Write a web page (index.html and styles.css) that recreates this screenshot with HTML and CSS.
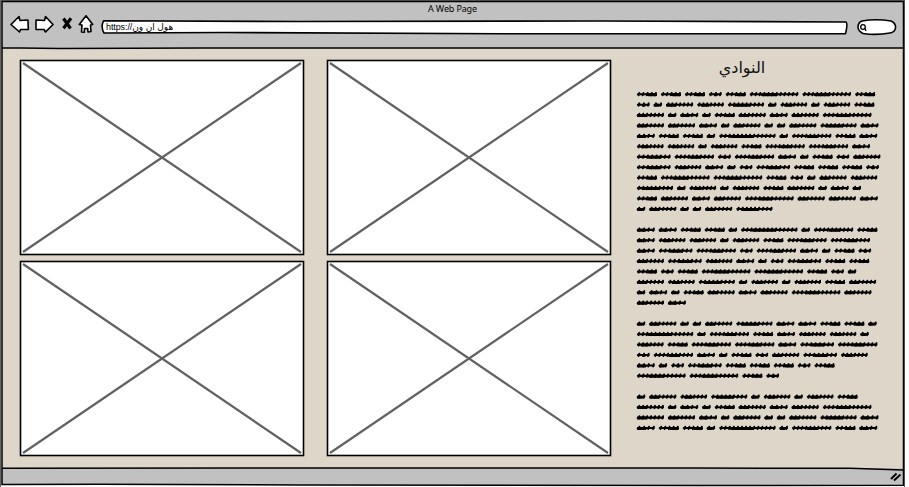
FILE: index.html
```html
<!DOCTYPE html>
<html lang="ar">
<head>
<meta charset="utf-8">
<title>A Web Page</title>
<link rel="stylesheet" href="styles.css">
</head>
<body>
<div class="window">
  <header class="chrome">
    <div class="title">A Web Page</div>
    <div class="toolbar">
      <svg class="nav" width="90" height="22" viewBox="8 14 90 22">
        <path class="ink" d="M11 24.500L19 16.500L20 20.500L28 20L28.300 29.500L20.500 29.500L19.500 32Z"/>
        <path class="ink" d="M53 24.500L45.500 16.500L44.500 20.500L36 20L36 29.500L44 29.500L45.500 32Z"/>
        <path class="cross" d="M63.500 18.500L70.500 28.500M71 18.300L63.500 28.300"/>
        <path class="ink" d="M86 15.800L79.300 24.500L82 25L81.500 32L84.300 32.300L84.500 28.500L87.700 28.500L88 32L91 31.500L90.500 25L92.700 24.500Z"/>
      </svg>
      <div class="address">
        <svg class="frame" width="748" height="16" viewBox="100 19 748 16"><path class="ink" d="M103.500 20.800L300 21.500L600 21L846 22Q848 24 845.500 33.700L500 33.800L224 32.500L104 33Q100.500 27 103.500 20.800Z"/></svg>
        <span class="url">https://هول ان ون</span>
      </div>
      <svg class="search" width="42" height="18" viewBox="856 18 42 18">
        <path class="ink" d="M862 21Q876 18.500 891 21Q896 23 895.500 28Q895 32 890 33Q876 35.500 863 33.500Q858 31 858 27Q858 22.500 862 21Z"/>
        <circle class="lens" cx="863" cy="27" r="2.300"/><path class="lens" d="M865 28.500L866 31"/>
      </svg>
    </div>
  </header>
  <main class="page">
    <div class="gallery">
      <svg class="photo" viewBox="0 0 286 197"><rect x="1.500" y="1.500" width="283" height="194"/><path d="M4 4L282 193M282 4L4 193"/></svg>
      <svg class="photo" viewBox="0 0 286 197"><rect x="1.500" y="1.500" width="283" height="194"/><path d="M4 4L282 193M282 4L4 193"/></svg>
      <svg class="photo" viewBox="0 0 286 197"><rect x="1.500" y="1.500" width="283" height="194"/><path d="M4 4L282 193M282 4L4 193"/></svg>
      <svg class="photo" viewBox="0 0 286 197"><rect x="1.500" y="1.500" width="283" height="194"/><path d="M4 4L282 193M282 4L4 193"/></svg>
    </div>
    <section class="clubs">
      <h1 class="heading" dir="rtl">النوادي</h1>
      <svg class="copy" id="copy" width="250" height="346"></svg>
    </section>
  </main>
  <footer class="status">
    <svg width="12" height="10" viewBox="0 0 12 10"><path class="grip" d="M1 7L6.500 1.500M4 8.500L10.500 2.500"/></svg>
  </footer>
  <svg class="outline" width="905" height="487" viewBox="0 0 905 487">
    <path class="edge" d="M0 .5H905M.5 0V487M904.500 0V487"/>
    <path class="border" d="M2 1.500H903.500V485.300L700 485.500L300 485L100 484.300L2 484.500ZM2 47.700L60 48.500L200 48L903 48M2 468.200L300 468L690 468L850 468.300L903 470"/>
  </svg>
</div>
<script src="scribble.js"></script>
</body>
</html>
```

FILE: scribble.js
```js
// Each row lists the letter counts of its scribbled words; an empty row separates paragraphs.
const rows = [
  [5,5,5,3,5,11,11,5], [3,2,7,6,10,2,6,2,6,5], [7,2,4,2,5,7,4,7,12],
  [7,7,4,2,7,2,2,7,10,4], [4,5,5,2,13,2,9,5,4], [6,6,2,6,5,9,9,4],
  [8,9,3,9,4,2,5,3,7], [8,6,4,2,3,8,5,5,5,3], [5,11,11,5,3,2,7,6],
  [10,2,6,2,6,5,7,2,4,2], [5,7,4,7,12,7,7,4], [2,7,2,2,7,10], [],
  [4,4,5,5,2,13,2,9,5], [4,6,6,2,6,5,9,9], [4,8,9,3,9,4,2,5,3],
  [7,8,6,4,2,3,8,5,5], [5,3,5,11,11,5,3,2], [7,6,10,2,6,2,6,5,7],
  [2,4,2,5,7,4,7,12,7], [7,4], [],
  [2,7,2,2,7,10,4,4,5,5,2], [13,2,9,5,4,6,6,2], [6,5,9,9,4,8,9],
  [3,9,4,2,5,3,7,8,6], [4,2,3,8,5,5,5,3,5], [11,11,5,3], [],
  [2,7,6,10,2,6,2,6,5], [7,2,4,2,5,7,4,7,12],
  [7,7,4,2,7,2,2,7,10,4], [4,5,5,2,13,2,9,5,4]
];
const widths = {2:8.8,3:13.2,4:18.3,5:20.4,6:27.1,7:27.5,8:34.1,9:39.8,10:36.6,11:49.1,12:49.1,13:56.8};
// Stretches of dense strokes inside a word, as fractions of its width.
const dense = {2:[0,.6],3:[.5,.6],4:[0,.45],5:[.6,1],6:[.15,.4],7:[0,.3],8:[.35,.7],9:[.4,.65],10:[.15,.6],11:[.25,.55],12:[.3,.55],13:[.2,.6]};
const pitch = 10.43, gap = 3.6;
let body = '', heavy = '', marks = '';
rows.forEach((row, r) => {
  const y = 6 + r * pitch;
  let x = 1;
  row.forEach(n => {
    const w = widths[n], [a, b] = dense[n];
    body += `M${x + .9} ${y + .3}H${x + w - 1.5}`;
    heavy += `M${x + 1.2 + a * (w - 3)} ${y + .7}H${x + 1.2 + b * (w - 3)}`;
    const count = Math.round(w / 4.1);
    for (let i = 0; i < count; i++) {
      const cx = x + 2.2 + i * (w - 3.8) / Math.max(1, count - 1);
      marks += `M${cx - .6} ${y + 1.3}L${cx + .1} ${y - 1.1}`;
    }
    x += w + gap;
  });
});
document.getElementById('copy').innerHTML =
  `<path class="body" d="${body}"/><path class="heavy" d="${heavy}"/><path class="mark" d="${marks}"/>`;
```

FILE: styles.css
```css
body { margin: 0; background: #fff; }
.window { position: relative; width: 905px; height: 487px; display: flex; flex-direction: column; background: #fff; }
.chrome { height: 48px; background: #c1c1c1; flex: none; }
.title { height: 14px; padding-top: 2px; box-sizing: border-box; text-align: center; font: 9px/13px "Noto Sans", sans-serif; letter-spacing: -.15px; color: #000; }
.toolbar { display: flex; align-items: flex-start; padding-left: 8px; }
.nav { flex: none; }
.address { position: relative; width: 748px; height: 16px; margin: 5px 8px 0 2px; flex: none; }
.frame { position: absolute; inset: 0; }
.url { position: absolute; left: 6px; top: 1px; font: 9px/14px "Liberation Sans", "DejaVu Sans", sans-serif; letter-spacing: -.1px; color: #000; white-space: nowrap; }
.search { margin-top: 4px; flex: none; }
.ink { fill: #fff; stroke: #000; stroke-width: 1.6; stroke-linejoin: round; }
.cross { fill: none; stroke: #000; stroke-width: 3.1; }
.lens { fill: none; stroke: #000; stroke-width: 1.3; }
.page { height: 420px; flex: none; box-sizing: border-box; display: flex; padding: 11px 0 0 19px; background: #ddd6c9; }
.gallery { display: grid; grid-template-columns: 286px 286px; grid-template-rows: 197px 197px; column-gap: 21px; row-gap: 4px; align-content: start; }
.photo { width: 286px; height: 197px; }
.photo rect { fill: #fff; stroke: #000; stroke-width: 1.6; }
.photo path { fill: none; stroke: #626262; stroke-width: 2.2; }
.clubs { width: 250px; margin-left: 24px; }
.heading { margin: 0; width: 212px; height: 29px; text-align: center; font: 16px/18px "DejaVu Sans", sans-serif; color: #111; }
.copy { display: block; }
.body { fill: none; stroke: #000; stroke-width: 2.1; stroke-linecap: round; }
.heavy { fill: none; stroke: #000; stroke-width: 3; stroke-linecap: round; }
.mark { fill: none; stroke: #000; stroke-width: 1.9; stroke-linecap: round; }
.status { height: 17px; flex: none; display: flex; justify-content: flex-end; align-items: center; padding-right: 3px; box-sizing: border-box; background: #c1c1c1; }
.grip { fill: none; stroke: #000; stroke-width: 1.9; }
.outline { position: absolute; inset: 0; pointer-events: none; }
.edge { fill: none; stroke: #666; }
.border { fill: none; stroke: #000; stroke-width: 1.5; }
```
